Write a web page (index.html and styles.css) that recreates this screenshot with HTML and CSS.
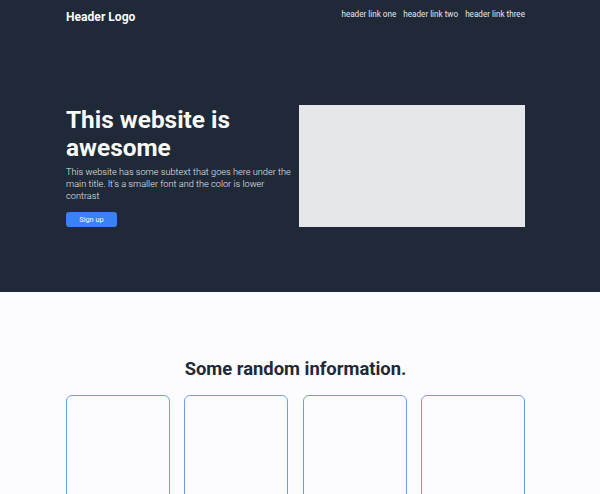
FILE: index.html
```html
<!DOCTYPE html>
<html>
<head>
<meta charset="utf-8">
<link rel="stylesheet" href="styles.css">
</head>
<body>
<div class="top">
  <div class="wrap">
    <nav class="nav">
      <div class="logo">Header Logo</div>
      <ul class="links">
        <li>header link one</li>
        <li>header link two</li>
        <li>header link three</li>
      </ul>
    </nav>
    <section class="hero">
      <div class="hero-text">
        <h1 class="title">This website is awesome</h1>
        <p class="sub">This website has some subtext that goes here under the main title. It's a smaller font and the color is lower contrast</p>
        <button class="btn">Sign up</button>
      </div>
      <div class="hero-img"></div>
    </section>
  </div>
</div>
<div class="info">
  <div class="wrap">
    <h2 class="info-title">Some random information.</h2>
    <div class="cards">
      <div class="card"></div>
      <div class="card"></div>
      <div class="card"></div>
      <div class="card"></div>
    </div>
  </div>
</div>
</body>
</html>
```

FILE: styles.css
```css
html, body {
  margin: 0;
  padding: 0;
}
body {
  font-family: Roboto, "Liberation Sans", sans-serif;
  background: #fcfcfe;
  overflow: hidden;
}
.wrap {
  width: 459px;
  margin-left: 66px;
}
.top {
  background: #1f2937;
  height: 292px;
}
.nav {
  display: flex;
  justify-content: space-between;
  align-items: center;
  height: 33px;
}
.logo {
  color: #f9faf8;
  font-weight: 700;
  font-size: 12.1px;
}
.links {
  display: flex;
  gap: 7px;
  list-style: none;
  margin: 0;
  padding: 0;
  color: #e5e7eb;
  font-size: 8.15px;
  margin-top: -5px;
}
.hero {
  display: flex;
  align-items: center;
  justify-content: space-between;
  margin-top: 72px;
}
.hero-text {
  width: 232px;
}
.title {
  margin: 0;
  color: #f9faf8;
  font-size: 24.4px;
  font-weight: 700;
  line-height: 28px;
}
.sub {
  margin: 4px 0 0;
  color: #e5e7eb;
  font-size: 9.2px;
  line-height: 12px;
  font-weight: 300;
}
.btn {
  display: block;
  margin-top: 10px;
  width: 51px;
  height: 15px;
  border: none;
  border-radius: 3px;
  background: #3882f6;
  color: #f9faf8;
  font-family: Roboto, "Liberation Sans", sans-serif;
  font-size: 7.4px;
  padding: 0;
}
.hero-img {
  width: 226px;
  height: 122px;
  background: #e5e7eb;
}
.info-title {
  margin: 0;
  padding-top: 66px;
  text-align: center;
  color: #1f2937;
  font-size: 18.4px;
  font-weight: 700;
  line-height: 22px;
}
.cards {
  display: flex;
  justify-content: space-between;
  margin-top: 15px;
}
.card {
  box-sizing: border-box;
  width: 104px;
  height: 140px;
  border: 1.5px solid #6f9ef0;
  border-radius: 6px;
}
```
